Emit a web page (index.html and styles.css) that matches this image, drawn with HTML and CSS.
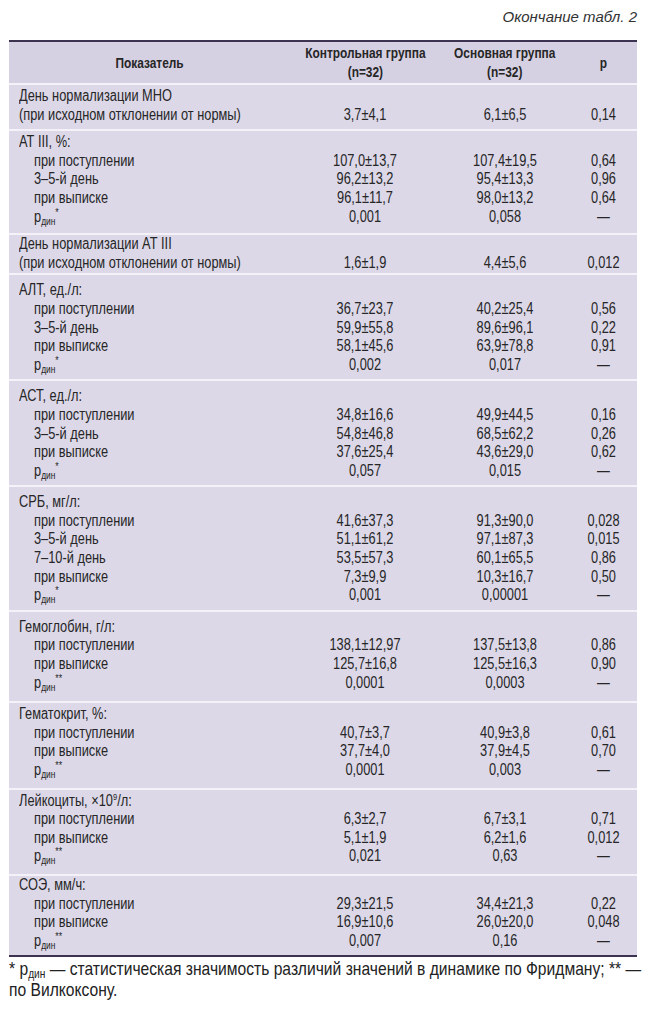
FILE: index.html
```html
<!DOCTYPE html>
<html lang="ru">
<head>
<meta charset="utf-8">
<title>Окончание табл. 2</title>
<link rel="stylesheet" href="styles.css">
</head>
<body>
<div class="page">
  <div class="caption">Окончание табл. 2</div>
  <table class="tbl">
    <colgroup>
      <col class="c-label"><col class="c-ctrl"><col class="c-main"><col class="c-p">
    </colgroup>
    <thead>
      <tr>
        <th><span class="hx">Показатель</span></th>
        <th><span class="hx">Контрольная группа<br>(n=32)</span></th>
        <th><span class="hx">Основная группа<br>(n=32)</span></th>
        <th><span class="hx">p</span></th>
      </tr>
    </thead>
    <tbody>
      <tr class="r-mno">
        <td class="lbl"><div>День нормализации МНО</div><div>(при исходном отклонении от нормы)</div></td>
        <td class="val"><div>&nbsp;</div><div>3,7±4,1</div></td>
        <td class="val"><div>&nbsp;</div><div>6,1±6,5</div></td>
        <td class="val"><div>&nbsp;</div><div>0,14</div></td>
      </tr>
      <tr>
        <td class="lbl"><div>АТ III, %:</div><div class="sub">при поступлении</div><div class="sub">3–5-й день</div><div class="sub">при выписке</div><div class="sub">p<span class="ix">дин</span><span class="st">*</span></div></td>
        <td class="val"><div>&nbsp;</div><div>107,0±13,7</div><div>96,2±13,2</div><div>96,1±11,7</div><div>0,001</div></td>
        <td class="val"><div>&nbsp;</div><div>107,4±19,5</div><div>95,4±13,3</div><div>98,0±13,2</div><div>0,058</div></td>
        <td class="val"><div>&nbsp;</div><div>0,64</div><div>0,96</div><div>0,64</div><div>—</div></td>
      </tr>
      <tr class="r-atday">
        <td class="lbl"><div>День нормализации АТ III</div><div>(при исходном отклонении от нормы)</div></td>
        <td class="val"><div>&nbsp;</div><div>1,6±1,9</div></td>
        <td class="val"><div>&nbsp;</div><div>4,4±5,6</div></td>
        <td class="val"><div>&nbsp;</div><div>0,012</div></td>
      </tr>
      <tr class="r-hi">
        <td class="lbl"><div>АЛТ, ед./л:</div><div class="sub">при поступлении</div><div class="sub">3–5-й день</div><div class="sub">при выписке</div><div class="sub">p<span class="ix">дин</span><span class="st">*</span></div></td>
        <td class="val"><div>&nbsp;</div><div>36,7±23,7</div><div>59,9±55,8</div><div>58,1±45,6</div><div>0,002</div></td>
        <td class="val"><div>&nbsp;</div><div>40,2±25,4</div><div>89,6±96,1</div><div>63,9±78,8</div><div>0,017</div></td>
        <td class="val"><div>&nbsp;</div><div>0,56</div><div>0,22</div><div>0,91</div><div>—</div></td>
      </tr>
      <tr class="r-hi">
        <td class="lbl"><div>АСТ, ед./л:</div><div class="sub">при поступлении</div><div class="sub">3–5-й день</div><div class="sub">при выписке</div><div class="sub">p<span class="ix">дин</span><span class="st">*</span></div></td>
        <td class="val"><div>&nbsp;</div><div>34,8±16,6</div><div>54,8±46,8</div><div>37,6±25,4</div><div>0,057</div></td>
        <td class="val"><div>&nbsp;</div><div>49,9±44,5</div><div>68,5±62,2</div><div>43,6±29,0</div><div>0,015</div></td>
        <td class="val"><div>&nbsp;</div><div>0,16</div><div>0,26</div><div>0,62</div><div>—</div></td>
      </tr>
      <tr class="r-hi">
        <td class="lbl"><div>СРБ, мг/л:</div><div class="sub">при поступлении</div><div class="sub">3–5-й день</div><div class="sub">7–10-й день</div><div class="sub">при выписке</div><div class="sub">p<span class="ix">дин</span><span class="st">*</span></div></td>
        <td class="val"><div>&nbsp;</div><div>41,6±37,3</div><div>51,1±61,2</div><div>53,5±57,3</div><div>7,3±9,9</div><div>0,001</div></td>
        <td class="val"><div>&nbsp;</div><div>91,3±90,0</div><div>97,1±87,3</div><div>60,1±65,5</div><div>10,3±16,7</div><div>0,00001</div></td>
        <td class="val"><div>&nbsp;</div><div>0,028</div><div>0,015</div><div>0,86</div><div>0,50</div><div>—</div></td>
      </tr>
      <tr class="r-hb">
        <td class="lbl"><div>Гемоглобин, г/л:</div><div class="sub">при поступлении</div><div class="sub">при выписке</div><div class="sub">p<span class="ix">дин</span><span class="st">**</span></div></td>
        <td class="val"><div>&nbsp;</div><div>138,1±12,97</div><div>125,7±16,8</div><div>0,0001</div></td>
        <td class="val"><div>&nbsp;</div><div>137,5±13,8</div><div>125,5±16,3</div><div>0,0003</div></td>
        <td class="val"><div>&nbsp;</div><div>0,86</div><div>0,90</div><div>—</div></td>
      </tr>
      <tr class="r-mid">
        <td class="lbl"><div>Гематокрит, %:</div><div class="sub">при поступлении</div><div class="sub">при выписке</div><div class="sub">p<span class="ix">дин</span><span class="st">**</span></div></td>
        <td class="val"><div>&nbsp;</div><div>40,7±3,7</div><div>37,7±4,0</div><div>0,0001</div></td>
        <td class="val"><div>&nbsp;</div><div>40,9±3,8</div><div>37,9±4,5</div><div>0,003</div></td>
        <td class="val"><div>&nbsp;</div><div>0,61</div><div>0,70</div><div>—</div></td>
      </tr>
      <tr class="r-mid">
        <td class="lbl"><div>Лейкоциты, ×10<span class="pw">9</span>/л:</div><div class="sub">при поступлении</div><div class="sub">при выписке</div><div class="sub">p<span class="ix">дин</span><span class="st">**</span></div></td>
        <td class="val"><div>&nbsp;</div><div>6,3±2,7</div><div>5,1±1,9</div><div>0,021</div></td>
        <td class="val"><div>&nbsp;</div><div>6,7±3,1</div><div>6,2±1,6</div><div>0,63</div></td>
        <td class="val"><div>&nbsp;</div><div>0,71</div><div>0,012</div><div>—</div></td>
      </tr>
      <tr class="r-soe">
        <td class="lbl"><div>СОЭ, мм/ч:</div><div class="sub">при поступлении</div><div class="sub">при выписке</div><div class="sub">p<span class="ix">дин</span><span class="st">**</span></div></td>
        <td class="val"><div>&nbsp;</div><div>29,3±21,5</div><div>16,9±10,6</div><div>0,007</div></td>
        <td class="val"><div>&nbsp;</div><div>34,4±21,3</div><div>26,0±20,0</div><div>0,16</div></td>
        <td class="val"><div>&nbsp;</div><div>0,22</div><div>0,048</div><div>—</div></td>
      </tr>
    </tbody>
  </table>
  <p class="note"><span class="nl">* p<span class="ix">дин</span> — статистическая значимость различий значений в динамике по Фридману; ** —</span><span class="nl">по Вилкоксону.</span></p>
</div>
</body>
</html>
```

FILE: styles.css
```css
html, body {
  margin: 0;
  padding: 0;
  background: #ffffff;
}
body {
  font-family: "Liberation Sans", Arial, sans-serif;
  color: #262626;
}
.page {
  width: 628px;
  padding: 7px 0 0 9px;
}
.caption {
  text-align: right;
  font-style: italic;
  font-size: 15px;
  line-height: 20px;
  margin-bottom: 13px;
  color: #333;
}
.tbl {
  width: 628px;
  border-collapse: collapse;
  table-layout: fixed;
  background: #dcd8e8;
  font-size: 16px;
  border-top: 2px solid #3b3350;
  border-bottom: 2px solid #3b3350;
}
.c-label { width: 281px; }
.c-ctrl { width: 150px; }
.c-main { width: 130px; }
.c-p { width: 67px; }
thead th {
  background: #d6d0e3;
  font-weight: bold;
  font-size: 14.5px;
  line-height: 19px;
  padding: 2px 0 1px;
  text-align: center;
  vertical-align: middle;
  color: #262626;
}
.hx {
  display: inline-block;
  white-space: nowrap;
  transform: scaleX(0.82);
  transform-origin: 50% 50%;
}
tbody tr {
  border-top: 2px solid #f4f2f8;
}
tbody td {
  vertical-align: top;
  padding-top: 2px;
  padding-bottom: 7px;
  line-height: 18.6px;
}
tbody tr.r-mno td { padding-bottom: 5px; }
tbody tr.r-atday td { padding-top: 0; padding-bottom: 1px; }
tbody tr.r-hi td { padding-top: 6px; padding-bottom: 5px; }
tbody tr.r-hb td { padding-top: 6px; padding-bottom: 9px; }
tbody tr.r-mid td { padding-bottom: 8px; }
tbody tr.r-soe td { padding-top: 0; padding-bottom: 5px; }
.lbl {
  padding-left: 10px;
}
.lbl > div {
  white-space: nowrap;
  transform: scaleX(0.8);
  transform-origin: 0 50%;
}
.lbl > .sub {
  margin-left: 15px;
}
.val {
  text-align: center;
}
.val > div {
  white-space: nowrap;
  transform: scaleX(0.8);
  transform-origin: 50% 50%;
}
.ix {
  font-size: 10.5px;
  line-height: 0;
  vertical-align: -3px;
}
.st {
  font-size: 11px;
  line-height: 0;
  vertical-align: 6px;
}
.pw {
  font-size: 9.5px;
  line-height: 0;
  vertical-align: 6px;
}
.note {
  margin: 2px 0 0;
  font-size: 18.5px;
  line-height: 20.5px;
  color: #222;
}
.nl {
  display: block;
  white-space: nowrap;
  transform: scaleX(0.845);
  transform-origin: 0 50%;
}
.note .ix {
  font-size: 12px;
}
```
